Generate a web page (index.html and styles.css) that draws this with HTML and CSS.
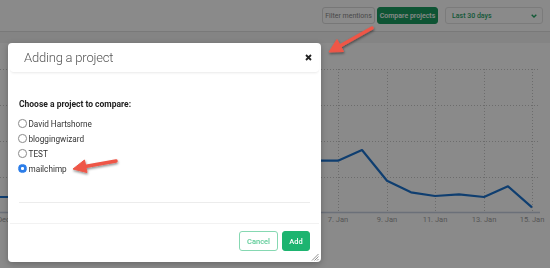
FILE: index.html
```html
<!DOCTYPE html>
<html lang="en">
<head>
    <meta charset="UTF-8">
    <meta name="viewport" content="width=device-width, initial-scale=1.0">
    <title>Mentions</title>
    <link rel="stylesheet" href="styles.css">
</head>
<body>
    <header class="topbar">
        <button class="btn btn-light">Filter mentions</button>
        <button class="btn btn-green">Compare projects</button>
        <div class="select">
            <span>Last 30 days</span>
            <svg width="6" height="4" viewBox="0 0 6 4"><path d="M0.7 0.7 L3 3 L5.3 0.7" fill="none" stroke="#22a565" stroke-width="1.4"/></svg>
        </div>
    </header>
    <div class="subbar"></div>

    <div class="chart">
        <svg width="550" height="225" viewBox="0 0 550 225">
            <g stroke="#c8c8c8" stroke-width="1" stroke-dasharray="1 2">
                <line x1="0" y1="26.5" x2="540" y2="26.5"/>
                <line x1="0" y1="62.5" x2="540" y2="62.5"/>
                <line x1="0" y1="98.5" x2="540" y2="98.5"/>
                <line x1="0" y1="134.5" x2="540" y2="134.5"/>
                <line x1="338.5" y1="26" x2="338.5" y2="169"/>
                <line x1="387.5" y1="26" x2="387.5" y2="169"/>
                <line x1="435.5" y1="26" x2="435.5" y2="169"/>
                <line x1="484.5" y1="26" x2="484.5" y2="169"/>
                <line x1="532.5" y1="26" x2="532.5" y2="169"/>
            </g>
            <line x1="0" y1="169.5" x2="540" y2="169.5" stroke="#c6cfe0" stroke-width="1.5"/>
            <polyline fill="none" stroke="#1d74cf" stroke-width="2.2" stroke-linejoin="round"
                points="-10,154 12,154 314,117.7 338,117.7 362,107 387,137.7 411,149.3 435,153 459,151.3 484,154 508,143.3 532,164.3"/>
            <g class="axis-labels" text-anchor="middle">
                <text x="10" y="179" text-anchor="end">31. Dec</text>
                <text x="338" y="179">7. Jan</text>
                <text x="387" y="179">9. Jan</text>
                <text x="435" y="179">11. Jan</text>
                <text x="484" y="179">13. Jan</text>
                <text x="532" y="179">15. Jan</text>
            </g>
        </svg>
    </div>

    <div class="backdrop"></div>

    <div class="modal">
        <div class="modal-header">
            <h2>Adding a project</h2>
            <button class="close">
                <svg width="7" height="7" viewBox="0 0 7 7"><path d="M1 1 L6 6 M6 1 L1 6" stroke="#222" stroke-width="1.8"/></svg>
            </button>
        </div>
        <div class="modal-body">
            <h4>Choose a project to compare:</h4>
            <label class="option"><input type="radio" name="project"> David Hartshorne</label>
            <label class="option"><input type="radio" name="project"> bloggingwizard</label>
            <label class="option"><input type="radio" name="project"> TEST</label>
            <label class="option"><input type="radio" name="project" checked> mailchimp</label>
            <hr>
        </div>
        <div class="modal-footer">
            <button class="btn btn-outline">Cancel</button>
            <button class="btn btn-add">Add</button>
        </div>
        <svg class="resize" width="8" height="8" viewBox="0 0 8 8">
            <path d="M7.5 1 L1 7.5 M7.5 3.5 L3.5 7.5 M7.5 6 L6 7.5" stroke="#777" stroke-width="0.8"/>
        </svg>
    </div>

    <!-- annotation arrows -->
    <svg class="arrows" width="550" height="268" viewBox="0 0 550 268">
        <defs>
            <filter id="shadow" x="-20%" y="-20%" width="140%" height="140%">
                <feDropShadow dx="0.5" dy="1.5" stdDeviation="1" flood-color="#000" flood-opacity="0.45"/>
            </filter>
        </defs>
        <g fill="#ee5647" stroke="#ee5647" filter="url(#shadow)">
            <line x1="372" y1="28" x2="340" y2="46" stroke-width="3.5" stroke-linecap="round"/>
            <polygon points="329,52 343.5,51.5 337,39.5" stroke-width="1" stroke-linejoin="round"/>
            <line x1="116" y1="161" x2="85" y2="166.5" stroke-width="3.5" stroke-linecap="round"/>
            <polygon points="73,169 87,172.5 84.5,160" stroke-width="1" stroke-linejoin="round"/>
        </g>
    </svg>
</body>
</html>
```

FILE: styles.css
```css
* {
    box-sizing: border-box;
}
body {
    margin: 0;
    width: 550px;
    height: 268px;
    overflow: hidden;
    position: relative;
    background-color: #fff;
    font-family: Roboto, "Liberation Sans", sans-serif;
}
.topbar {
    height: 32px;
    border-bottom: 1px solid #e0e0e0;
    display: flex;
    justify-content: flex-end;
    align-items: flex-start;
    padding: 7px 7px 0 0;
}
.btn {
    font-family: inherit;
    cursor: pointer;
    border-radius: 3px;
    padding: 0;
}
.topbar .btn {
    height: 17px;
    font-size: 7px;
}
.btn-light {
    width: 53px;
    background-color: #fff;
    border: 1px solid #dcdcdc;
    color: #888;
    margin-right: 2px;
}
.btn-green {
    width: 61px;
    background-color: #1a9c60;
    border: 1px solid #1a9c60;
    color: #fff;
    font-weight: 500;
    margin-right: 7px;
}
.select {
    width: 98px;
    height: 17px;
    border: 1px solid #e4e4e4;
    border-radius: 3px;
    display: flex;
    align-items: center;
    justify-content: space-between;
    padding: 0 5px 0 6px;
    font-size: 7px;
    font-weight: 500;
    color: #2aa56a;
}
.subbar {
    height: 11px;
    background-color: #f4f4f4;
}
.chart svg {
    display: block;
}
.axis-labels {
    font-family: Roboto, "Liberation Sans", sans-serif;
    font-size: 7.5px;
    fill: #a0a0a0;
}
.backdrop {
    position: fixed;
    inset: 0;
    background-color: rgba(0, 0, 0, 0.46);
}
.modal {
    position: absolute;
    left: 8px;
    top: 43px;
    width: 313px;
    height: 219px;
    background-color: #fff;
    border-radius: 4px;
    display: flex;
    flex-direction: column;
    box-shadow: 0 2px 6px rgba(0, 0, 0, 0.25);
}
.modal-header {
    height: 30px;
    margin: 0 2px;
    padding: 0 7px 0 14px;
    display: flex;
    align-items: center;
    justify-content: space-between;
    border-bottom: 1px solid #f0f0f0;
    border-radius: 0 0 4px 4px;
    box-shadow: 0 1px 2px rgba(0, 0, 0, 0.04);
}
.modal-header h2 {
    margin: 0;
    font-size: 13px;
    font-weight: 300;
    color: #555;
    letter-spacing: -0.2px;
}
.close {
    border: none;
    background: none;
    padding: 0;
    width: 7px;
    height: 7px;
    display: flex;
}
.modal-body {
    padding: 25px 11px 20px 11px;
}
.modal-body h4 {
    margin: 0 0 6px 0;
    font-size: 8.5px;
    line-height: 12px;
    font-weight: 700;
    color: #222;
}
.option {
    display: flex;
    align-items: center;
    height: 15px;
    margin-left: -1px;
    font-size: 8.2px;
    color: #333;
}
.option input {
    appearance: none;
    width: 8.5px;
    height: 8.5px;
    margin: 0 2px 0 0;
    border: 1px solid #8a8a8a;
    border-radius: 50%;
    background-color: #fff;
}
.option input:checked {
    border-color: #2b7de9;
    background: radial-gradient(circle, #fff 0 1.3px, #2b7de9 1.7px);
}
.modal-body hr {
    margin: 26px 0 0 0;
    border: none;
    border-top: 1px solid #ececec;
}
.modal-footer {
    margin: auto 2px 0 2px;
    border-top: 1px solid #f2f2f2;
    padding: 7px 9px 11px 0;
    display: flex;
    justify-content: flex-end;
    gap: 4px;
}
.modal-footer .btn {
    height: 20px;
    font-size: 7.5px;
    font-weight: 500;
}
.btn-outline {
    width: 39px;
    background-color: #fff;
    border: 1px solid #86d8b2;
    color: #5ccb97;
}
.btn-add {
    width: 28px;
    background-color: #1db470;
    border: 1px solid #1db470;
    color: #fff;
}
.resize {
    position: absolute;
    right: 2px;
    bottom: 1px;
}
.arrows {
    position: absolute;
    left: 0;
    top: 0;
}
```
